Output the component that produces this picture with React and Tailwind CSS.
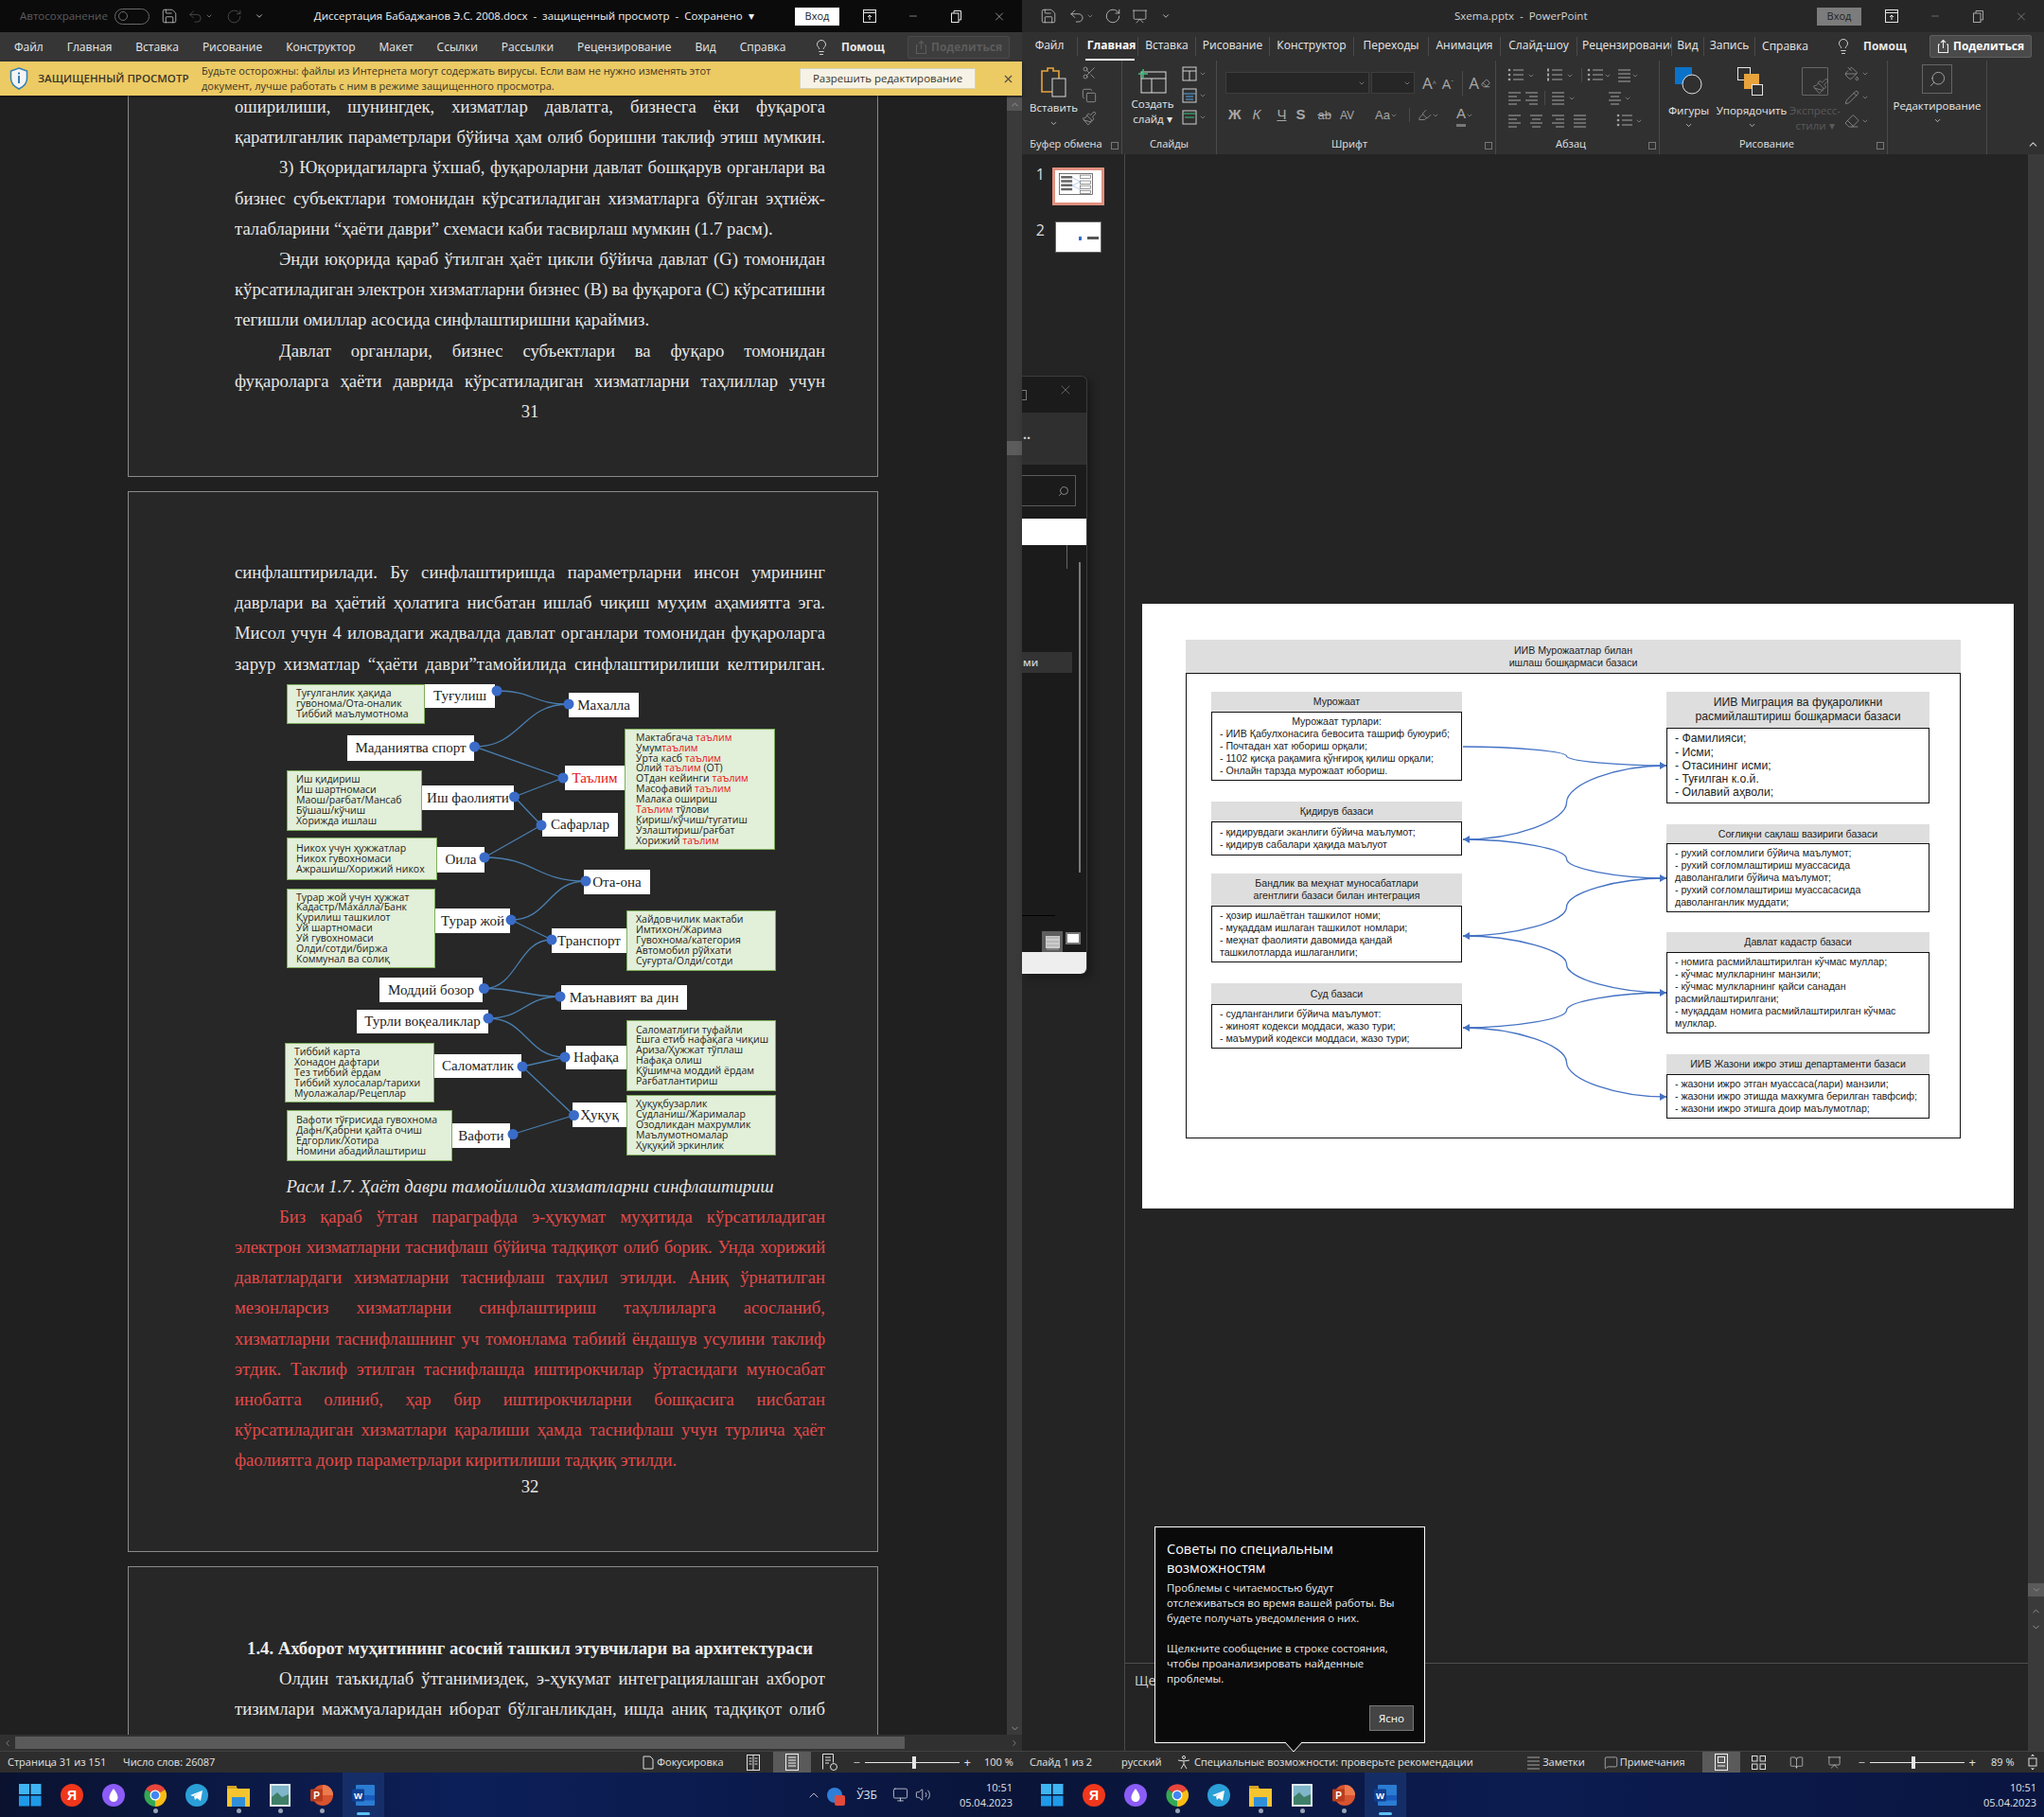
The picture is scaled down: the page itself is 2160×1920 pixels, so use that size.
import React from "react";
import {
  Scissors, Copy, Paintbrush, Search, ChevronDown, ChevronUp, ChevronLeft, ChevronRight,
  Lightbulb, Save, Undo2, RotateCw, Minus, X, PaintBucket, Pencil, Eraser, Highlighter,
  MessageSquare, Monitor, Volume2, BookOpen, Presentation,
} from "lucide-react";

const serif = "font-['Liberation_Serif',serif]";
const arial = "font-['Liberation_Sans',Arial,sans-serif]";

// --- small drawn icons ---
const Lines = ({ kind = "left", className = "" }) => {
  const rows = {
    left: [[1, 13], [1, 9], [1, 13], [1, 9]],
    center: [[1, 13], [3, 9], [1, 13], [3, 9]],
    right: [[1, 13], [5, 9], [1, 13], [5, 9]],
    justify: [[1, 13], [1, 13], [1, 13], [1, 13]],
  }[kind];
  return (
    <svg width="15" height="15" viewBox="0 0 15 15" className={className}>
      {rows.map(([x, w], i) => (
        <rect key={i} x={x} y={1.5 + i * 4} width={w} height="1" fill="#a4a4a4" />
      ))}
    </svg>
  );
};

const Bullets = ({ num }) => (
  <svg width="18" height="15" viewBox="0 0 18 15">
    {[2, 7, 12].map((y) => (
      <g key={y}>
        {num ? <rect x="1" y={y - 1.5} width="2" height="3" fill="#a4a4a4" /> : <circle cx="2" cy={y} r="1.3" fill="#a4a4a4" />}
        <rect x="6" y={y - 0.5} width="11" height="1" fill="#a4a4a4" />
      </g>
    ))}
  </svg>
);

const Caret = ({ className = "" }) => <ChevronDown size={8} strokeWidth={2} className={`text-[#9a9a9a] ${className}`} />;

const ShareIcon = ({ color = "#ddd" }) => (
  <svg width="14" height="16" viewBox="0 0 14 16" fill="none" stroke={color} strokeWidth="1.1">
    <path d="M3 6H1.5v8.5h10V6H10" />
    <path d="M6.5 10V1.5M4 4l2.5-2.5L9 4" />
  </svg>
);

const RibbonIcon = () => (
  <svg width="14" height="14" viewBox="0 0 14 14" fill="none" stroke="#e5e5e5" strokeWidth="1">
    <rect x="0.5" y="0.5" width="13" height="13" />
    <path d="M0.5 3.5h13M7 11V6M5 8l2-2 2 2" />
  </svg>
);

const Restore = ({ color }) => (
  <svg width="11" height="13" viewBox="0 0 11 13" fill="none" stroke={color} strokeWidth="1">
    <rect x="0.5" y="3" width="7.5" height="9.5" />
    <path d="M3 3V0.5h7.5V10H8" />
  </svg>
);

const WinLogo = () => (
  <svg width="24" height="24" viewBox="0 0 24 24">
    <rect x="0" y="0" width="11" height="11" fill="#3fb4f2" />
    <rect x="12.5" y="0" width="11" height="11" fill="#3fb4f2" />
    <rect x="0" y="12.5" width="11" height="11" fill="#1f9ae8" />
    <rect x="12.5" y="12.5" width="11" height="11" fill="#1f9ae8" />
  </svg>
);

const Yandex = () => (
  <svg width="24" height="24" viewBox="0 0 24 24">
    <circle cx="12" cy="12" r="12" fill="#f0371c" />
    <text x="12" y="17" textAnchor="middle" fontSize="14" fontWeight="700" fill="#fff" fontFamily="Liberation Sans">Я</text>
  </svg>
);

const Alice = () => (
  <svg width="24" height="24" viewBox="0 0 24 24">
    <circle cx="12" cy="12" r="12" fill="#8b5cf6" />
    <path d="M12 5c3 4 4.500 7 4.500 9.500a4.500 4.500 0 0 1-9 0C7.500 12 9 9 12 5z" fill="#fff" />
  </svg>
);

const Chrome = () => (
  <svg width="24" height="24" viewBox="0 0 24 24">
    <path d="M12 12 2 6a12 12 0 0 1 20.400 0z" fill="#e8453c" />
    <path d="M12 12 22.400 6A12 12 0 0 1 12 24z" fill="#f9bc15" />
    <path d="M12 12V24A12 12 0 0 1 2 6z" fill="#34a853" />
    <circle cx="12" cy="12" r="5.500" fill="#fff" />
    <circle cx="12" cy="12" r="4.300" fill="#4285f4" />
  </svg>
);

const Telegram = () => (
  <svg width="24" height="24" viewBox="0 0 24 24">
    <circle cx="12" cy="12" r="12" fill="#2a9fd8" />
    <path d="M5 12l13-5-2 11-4-3-2 2-1-4 6-4-7 4z" fill="#fff" />
  </svg>
);

const Folder = () => (
  <svg width="24" height="24" viewBox="0 0 24 24">
    <path d="M0 2h9l2 3h13v19H0z" fill="#f5c530" />
    <rect x="5" y="14" width="14" height="10" fill="#2f8fd8" />
    <rect x="0" y="2" width="10" height="3" fill="#d9a520" />
  </svg>
);

const Photos = () => (
  <svg width="24" height="26" viewBox="0 0 24 26">
    <rect x="1" y="1" width="22" height="24" fill="#dfe9ee" />
    <rect x="3" y="3" width="18" height="20" fill="#7fb6c9" />
    <path d="M3 23v-8l6-5 5 5 7-3v11z" fill="#3f7f68" />
  </svg>
);

const PptIcon = () => (
  <svg width="24" height="24" viewBox="0 0 24 24">
    <circle cx="13" cy="12" r="11" fill="#d8532f" />
    <path d="M13 1a11 11 0 0 1 11 11H13z" fill="#ec7a4d" />
    <rect x="0" y="5.500" width="13" height="13" rx="1" fill="#b83c1e" />
    <text x="6.500" y="16" textAnchor="middle" fontSize="10" fontWeight="700" fill="#fff" fontFamily="Liberation Sans">P</text>
  </svg>
);

const WordIcon = () => (
  <svg width="24" height="24" viewBox="0 0 24 24">
    <rect x="4" y="1" width="20" height="22" rx="1" fill="#2b7cd3" />
    <rect x="4" y="12" width="20" height="5.500" fill="#185abd" />
    <rect x="0" y="5.500" width="13" height="13" rx="1" fill="#103f91" />
    <text x="6.500" y="15.500" textAnchor="middle" fontSize="9.500" fontWeight="700" fill="#fff" fontFamily="Liberation Sans">W</text>
  </svg>
);

const Shield = () => (
  <svg width="20" height="24" viewBox="0 0 20 24">
    <path d="M10 1 18.500 4v8c0 5-3.500 8.500-8.500 11C5 20.500 1.500 17 1.500 12V4z" fill="#f4f4f4" stroke="#2f7fb8" strokeWidth="1.500" />
    <rect x="9" y="9" width="2" height="8" fill="#2f7fb8" />
    <rect x="9" y="5.500" width="2" height="2" fill="#2f7fb8" />
  </svg>
);

// --- window chrome ---
const WindowButtons = ({ login, dim }) => (
  <div className="flex items-center h-full">
    <div className={`w-[47px] h-[19px] flex items-center justify-center text-[11px] ${login}`}>Вход</div>
    <div className="w-[32px] ml-[16px] flex justify-center"><RibbonIcon /></div>
    <div className="w-[14px] ml-[23px] flex justify-center"><Minus size={12} color={dim} strokeWidth={1} /></div>
    <div className="w-[14px] ml-[31px] flex justify-center"><Restore color={dim} /></div>
    <div className="w-[14px] ml-[32px] flex justify-center"><X size={15} color={dim} strokeWidth={1} /></div>
  </div>
);

const HelpShare = ({ active }) => (
  <div className="flex items-center h-full ml-auto">
    <Lightbulb size={18} strokeWidth={1.2} className="text-[#e5e5e5] mr-[12px]" />
    <span className="font-bold text-[12px] text-[#e8e8e8] w-[70px]">Помощ</span>
    <div className={`w-[108px] h-[24px] rounded-[2px] flex items-center justify-center gap-[3px] text-[12px] font-bold border ${active ? "bg-[#4a4a4a] border-[#5e5e5e] text-white" : "bg-[#3d3d3d] border-[#4a4a4a] text-[#5c5c5c]"}`}>
      <ShareIcon color={active ? "#eee" : "#5c5c5c"} />
      Поделиться
    </div>
  </div>
);

const VSlider = ({ pct }) => (
  <div className="relative w-[100px] h-[1px] bg-[#e5e5e5]">
    <div className="absolute top-[-6px] w-[4px] h-[13px] bg-[#e5e5e5]" style={{ left: pct }} />
  </div>
);

const BookView = () => (
  <svg width="14" height="17" viewBox="0 0 14 17" fill="none" stroke="#e0e0e0" strokeWidth="1">
    <rect x="0.5" y="0.5" width="13" height="16" />
    <path d="M7 .5v16M2.500 4h3M2.500 7h3M2.500 10h3M8.500 4h3M8.500 7h3M8.500 10h3" />
  </svg>
);

const PageView = () => (
  <svg width="14" height="18" viewBox="0 0 14 18" fill="none" stroke="#f0f0f0" strokeWidth="1">
    <rect x="0.500" y="0.500" width="13" height="17" />
    <path d="M3 4h8M3 7h8M3 10h8M3 13h8" />
  </svg>
);

const WebView = () => (
  <svg width="16" height="18" viewBox="0 0 16 18" fill="none" stroke="#e0e0e0" strokeWidth="1">
    <path d="M.5 16.500V.5h11v9" />
    <path d="M3 4h6M3 7h6M3 10h4" />
    <circle cx="12" cy="14" r="3.500" />
  </svg>
);

const NormalView = () => (
  <svg width="14" height="18" viewBox="0 0 14 18" fill="none" stroke="#f0f0f0" strokeWidth="1">
    <rect x="0.500" y="0.500" width="13" height="17" />
    <rect x="3.500" y="3.500" width="7" height="6" />
    <path d="M3 13h8" />
  </svg>
);

const SorterView = () => (
  <svg width="15" height="15" viewBox="0 0 15 15" fill="none" stroke="#e0e0e0" strokeWidth="1">
    <rect x="0.500" y="0.500" width="5.500" height="5.500" />
    <rect x="9" y="0.500" width="5.500" height="5.500" />
    <rect x="0.500" y="9" width="5.500" height="5.500" />
    <rect x="9" y="9" width="5.500" height="5.500" />
  </svg>
);

const TaskIcons = () => {
  const icons = [<WinLogo />, <Yandex />, <Alice />, <Chrome />, <Telegram />, <Folder />, <Photos />, <PptIcon />, <WordIcon />];
  return (
    <div className="flex items-center h-full pl-[10px]">
      {icons.map((ic, i) => (
        <div key={i} className={`relative w-[44px] h-full flex items-center justify-center ${i === 8 ? "bg-[#1d3a7a]/60" : ""}`}>
          {ic}
          {[3, 5, 6, 7].includes(i) && <span className="absolute bottom-[4px] w-[5px] h-[5px] rounded-full bg-[#9aa3b5]" />}
          {i === 8 && <span className="absolute bottom-[2px] w-[14px] h-[3px] rounded-[2px] bg-[#5cc0f5]" />}
        </div>
      ))}
    </div>
  );
};

const Clock = () => (
  <div className="flex flex-col items-end text-[11px] leading-[16px] text-[#dfe3ea] pr-[8px] ml-[30px]">
    <span>10:51</span>
    <span>05.04.2023</span>
  </div>
);

// --- word document ---
const Line = ({ children, indent, plain, red, tight }) => (
  <div className={`h-[32.2px] leading-[32.2px] text-[18.67px] ${red ? "text-[#e24a4a]" : "text-[#e6e6e6]"} ${plain ? "" : "text-justify [text-align-last:justify]"} ${indent ? "pl-[47px]" : ""} ${tight ? "[word-spacing:-2px] tracking-[-0.15px]" : ""}`}>
    {children}
  </div>
);

const Node = ({ className, children }) => (
  <div className={`absolute bg-white flex items-center justify-center text-[15px] text-[#222] ${serif} ${className}`}>{children}</div>
);

const Green = ({ className, children }) => (
  <div className={`absolute bg-[#e2efd9] border border-[#7fae5c] pl-[9px] flex flex-col justify-center text-[10.500px] leading-[10.900px] text-[#222] whitespace-nowrap ${className}`}>{children}</div>
);

const R = ({ children }) => <span className="text-[#e81414]">{children}</span>;

const dots = {
  tug: [225, 10], mah: [301, 24], mad: [201.5, 69], tal: [295, 102], ish: [243.5, 122], saf: [272, 152],
  oil: [212, 186], ota: [319, 211], tur: [240, 252], tra: [283, 273], mod: [211.5, 324.5], man: [292, 333],
  tul: [216, 356], naf: [297, 397], sal: [252, 407], huq: [306.5, 458.5], vaf: [242, 478.5],
};
const curved = [["tug", "mah"], ["mah", "mad"], ["oil", "ota"], ["ota", "tur"], ["tra", "mod"], ["mod", "man"], ["man", "tul"], ["tul", "naf"]];
const straight = [["mad", "tal"], ["tal", "ish"], ["ish", "saf"], ["saf", "oil"], ["tur", "tra"], ["naf", "sal"], ["sal", "huq"], ["huq", "vaf"]];

const LifeFigure = () => (
  <div className="relative h-[510px] mt-[2px] ml-[52px] w-[522px] font-['Open_Sans',sans-serif]">
    <Green className="left-[3px] top-[3px] w-[146px] h-[42px]">
      <span>Туғулганлик ҳақида</span><span>гувонома/Ота-оналик</span><span>Тиббий маълумотнома</span>
    </Green>
    <Node className="left-[149px] top-[3px] w-[74px] h-[25px]">Туғулиш</Node>
    <Node className="left-[301px] top-[12px] w-[74px] h-[26px]">Махалла</Node>
    <Node className="left-[67px] top-[57px] w-[134px] h-[27px]">Маданиятва спорт</Node>
    <Node className="left-[297px] top-[89px] w-[63px] h-[26px] text-[#e81414]">Таълим</Node>
    <Green className="left-[360px] top-[50px] w-[159px] h-[128px] pl-[11px]">
      <span>Мактабгача <R>таълим</R></span><span>Умум<R>таълим</R></span><span>Ўрта касб <R>таълим</R></span>
      <span>Олий <R>таълим</R> (ОТ)</span><span>ОТдан кейинги <R>таълим</R></span><span>Масофавий <R>таълим</R></span>
      <span>Малака ошириш</span><span><R>Таълим</R> тўлови</span><span>Кириш/кўчиш/тугатиш</span>
      <span>Ўзлаштириш/рағбат</span><span>Хорижий <R>таълим</R></span>
    </Green>
    <Green className="left-[3px] top-[94px] w-[143px] h-[64px]">
      <span>Иш қидириш</span><span>Иш шартномаси</span><span>Маош/рағбат/Мансаб</span><span>Бўшаш/кўчиш</span><span>Хорижда ишлаш</span>
    </Green>
    <Node className="left-[146px] top-[110px] w-[97px] h-[26px]">Иш фаолияти</Node>
    <Node className="left-[273px] top-[139px] w-[80px] h-[25px]">Сафарлар</Node>
    <Green className="left-[3px] top-[165px] w-[159px] h-[45px]">
      <span>Никох учун ҳужжатлар</span><span>Никох гувохномаси</span><span>Ажрашиш/Хорижий никох</span>
    </Green>
    <Node className="left-[162px] top-[175px] w-[50px] h-[27px]">Оила</Node>
    <Node className="left-[317px] top-[199px] w-[70px] h-[26px]">Ота-она</Node>
    <Green className="left-[3px] top-[219px] w-[157px] h-[84px]">
      <span>Турар жой учун ҳужжат</span><span>Кадастр/Махалла/Банк</span><span>Қурилиш ташкилот</span><span>Уй шартномаси</span>
      <span>Уй гувохномаси</span><span>Олди/сотди/биржа</span><span>Коммунал ва солиқ</span>
    </Green>
    <Node className="left-[160px] top-[240px] w-[79px] h-[26px]">Турар жой</Node>
    <Node className="left-[283px] top-[261px] w-[79px] h-[26px]">Транспорт</Node>
    <Green className="left-[362px] top-[242px] w-[158px] h-[64px]">
      <span>Хайдовчилик мактаби</span><span>Имтихон/Жарима</span><span>Гувохнома/категория</span><span>Автомобил рўйхати</span><span>Суғурта/Олди/сотди</span>
    </Green>
    <Node className="left-[101px] top-[313px] w-[109px] h-[26px]">Моддий бозор</Node>
    <Node className="left-[293px] top-[321px] w-[133px] h-[26px]">Маънавият ва дин</Node>
    <Node className="left-[77px] top-[347px] w-[139px] h-[25px]">Турли воқеаликлар</Node>
    <Green className="left-[362px] top-[358px] w-[158px] h-[75px]">
      <span>Саломатлиги туфайли</span><span>Ешга етиб нафақага чиқиш</span><span>Ариза/Ҳужжат тўплаш</span><span>Нафақа олиш</span><span>Қўшимча моддий ёрдам</span><span>Рағбатлантириш</span>
    </Green>
    <Node className="left-[298px] top-[385px] w-[64px] h-[25px]">Нафақа</Node>
    <Green className="left-[1px] top-[382px] w-[158px] h-[63px]">
      <span>Тиббий карта</span><span>Хонадон дафтари</span><span>Тез тиббий ёрдам</span><span>Тиббий хулосалар/тарихи</span><span>Муолажалар/Рецеплар</span>
    </Green>
    <Node className="left-[159px] top-[394px] w-[92px] h-[25px]">Саломатлик</Node>
    <Node className="left-[305px] top-[445px] w-[57px] h-[26px]">Ҳуқуқ</Node>
    <Green className="left-[362px] top-[437px] w-[158px] h-[64px]">
      <span>Ҳуқуқбузарлик</span><span>Судланиш/Жарималар</span><span>Озодликдан махрумлик</span><span>Маълумотномалар</span><span>Ҳуқуқий эркинлик</span>
    </Green>
    <Green className="left-[3px] top-[453px] w-[175px] h-[54px]">
      <span>Вафоти тўғрисида гувохнома</span><span>Дафн/Қабрни қайта очиш</span><span>Едгорлик/Хотира</span><span>Номини абадийлаштириш</span>
    </Green>
    <Node className="left-[178px] top-[467px] w-[61px] h-[26px]">Вафоти</Node>
    <svg width="522" height="510" className="absolute left-0 top-0 pointer-events-none">
      {curved.map(([a, b]) => {
        const [x1, y1] = dots[a];
        const [x2, y2] = dots[b];
        const mx = (x1 + x2) / 2;
        return <path key={a + b} d={`M${x1} ${y1}C${mx} ${y1} ${mx} ${y2} ${x2} ${y2}`} fill="none" stroke="#4a7fb0" strokeWidth="1.300" />;
      })}
      {straight.map(([a, b]) => (
        <line key={a + b} x1={dots[a][0]} y1={dots[a][1]} x2={dots[b][0]} y2={dots[b][1]} stroke="#4a7fb0" strokeWidth="1.300" />
      ))}
      {Object.entries(dots).map(([k, [x, y]]) => (
        <circle key={k} cx={x} cy={y} r="5.500" fill="#3a6cc8" />
      ))}
    </svg>
  </div>
);

const StatusLeft = () => (
  <div className="h-[23px] bg-[#2d2d2d] border-t border-[#424242] flex items-center text-[11px] text-[#e4e4e4]">
    <span className="ml-[8px] w-[122px]">Страница 31 из 151</span>
    <span>Число слов: 26087</span>
    <span className="ml-auto flex items-center gap-[3px]">
      <svg width="13" height="15" viewBox="0 0 13 15" fill="none" stroke="#ddd"><path d="M2 1h7l3 3v10H2z" /></svg>
      Фокусировка
    </span>
    <span className="ml-[24px]"><BookView /></span>
    <span className="ml-[14px] w-[40px] h-full bg-[#5a5a5a] flex items-center justify-center"><PageView /></span>
    <span className="ml-[12px]"><WebView /></span>
    <Minus size={9} className="ml-[16px]" />
    <span className="ml-[4px]"><VSlider pct="50px" /></span>
    <span className="ml-[5px] text-[13px] leading-none">+</span>
    <span className="ml-[14px] w-[40px]">100 %</span>
  </div>
);

const WordWindow = () => (
  <div className="w-[1080px] h-full flex flex-col">
    {/* title bar */}
    <div className="h-[34px] bg-[#0b0b0b] flex items-center relative text-[11.500px]">
      <span className="ml-[21px] text-[#5c5c5c]">Автосохранение</span>
      <div className="ml-[7px] w-[37px] h-[17px] rounded-full border border-[#6a6a6a] flex items-center pl-[3px]">
        <span className="w-[10px] h-[10px] rounded-full border border-[#6a6a6a]" />
      </div>
      <Save size={18} strokeWidth={1} className="ml-[12px] text-[#d8d8d8]" />
      <Undo2 size={17} strokeWidth={1} className="ml-[10px] text-[#5c5c5c]" />
      <Caret className="ml-[2px]" />
      <RotateCw size={17} strokeWidth={1} className="ml-[14px] text-[#5c5c5c]" />
      <ChevronDown size={10} className="ml-[13px] text-[#d8d8d8]" />
      <span className="ml-[53px] text-[#f0f0f0] whitespace-pre w-[461px]">Диссертация Бабаджанов Э.С. 2008.docx  -  защищенный просмотр  -  Сохранено  ▾</span>
      <div className="ml-auto h-full pr-[17px]">
        <WindowButtons login="bg-white text-[#222]" dim="#e8e8e8" />
      </div>
    </div>
    {/* tabs */}
    <div className="h-[31px] bg-[#363636] flex items-center text-[12px] text-[#e8e8e8] pr-[13px]">
      <div className="flex gap-[25px] pl-[15px]">
        {["Файл", "Главная", "Вставка", "Рисование", "Конструктор", "Макет", "Ссылки", "Рассылки", "Рецензирование", "Вид", "Справка"].map((t) => (
          <span key={t}>{t}</span>
        ))}
      </div>
      <HelpShare />
    </div>
    {/* protected view */}
    <div className="h-[36px] bg-[#ecca64] flex items-center text-[#3a3526] relative z-10 shadow-[0_1px_3px_rgba(0,0,0,0.5)]">
      <div className="ml-[10px]"><Shield /></div>
      <span className="ml-[10px] text-[11.500px] font-semibold w-[173px] whitespace-nowrap">ЗАЩИЩЕННЫЙ ПРОСМОТР</span>
      <div className="text-[11px] leading-[16px] w-[600px] whitespace-nowrap">
        <div>Будьте осторожны: файлы из Интернета могут содержать вирусы. Если вам не нужно изменять этот</div>
        <div>документ, лучше работать с ним в режиме защищенного просмотра.</div>
      </div>
      <div className="ml-[32px] w-[186px] h-[22px] bg-[#f6f3e6] border border-[#d8d2b8] flex items-center justify-center text-[11.500px]">Разрешить редактирование</div>
      <X size={13} className="ml-[28px] text-[#4a4a4a]" strokeWidth={2} />
    </div>
    {/* document */}
    <div className="flex-1 min-h-0 flex bg-[#202020]">
      <div className={`w-[1064px] overflow-hidden ${serif}`}>
        <div className="-mt-[4px] ml-[135px] w-[793px] flex flex-col gap-[15px]">
          <div className="h-[407px] bg-[#272727] border border-t-0 border-[#8a8a8a] pl-[112px] pr-[55px]">
            <Line>оширилиши, шунингдек, хизматлар давлатга, бизнесга ёки фуқарога</Line>
            <Line tight>қаратилганлик параметрлари бўйича ҳам олиб боришни таклиф этиш мумкин.</Line>
            <Line indent>3) Юқоридагиларга ўхшаб, фуқароларни давлат бошқарув органлари ва</Line>
            <Line>бизнес субъектлари томонидан кўрсатиладиган хизматларга бўлган эҳтиёж-</Line>
            <Line plain>талабларини “ҳаёти даври” схемаси каби тасвирлаш мумкин (1.7 расм).</Line>
            <Line indent>Энди юқорида қараб ўтилган ҳаёт цикли бўйича давлат (G) томонидан</Line>
            <Line>кўрсатиладиган электрон хизматларни бизнес (B) ва фуқарога (C) кўрсатишни</Line>
            <Line plain>тегишли омиллар асосида синфлаштиришни қараймиз.</Line>
            <Line indent>Давлат органлари, бизнес субъектлари ва фуқаро томонидан</Line>
            <Line>фуқароларга ҳаёти даврида кўрсатиладиган хизматларни таҳлиллар учун</Line>
            <div className="text-center text-[18.67px] leading-[32px] text-[#e6e6e6]">31</div>
          </div>
          <div className="h-[1121px] bg-[#272727] border border-[#8a8a8a] pt-[69px] pl-[112px] pr-[55px]">
            <Line>синфлаштирилади. Бу синфлаштиришда параметрларни инсон умрининг</Line>
            <Line>даврлари ва ҳаётий ҳолатига нисбатан ишлаб чиқиш муҳим аҳамиятга эга.</Line>
            <Line>Мисол учун 4 иловадаги жадвалда давлат органлари томонидан фуқароларга</Line>
            <Line>зарур хизматлар “ҳаёти даври”тамойилида синфлаштирилиши келтирилган.</Line>
            <LifeFigure />
            <div className="mt-[8px] h-[32px] leading-[32px] text-center italic text-[18.67px] text-[#e6e6e6]">Расм 1.7. Ҳаёт даври тамойилида хизматларни синфлаштириш</div>
            <Line red indent>Биз қараб ўтган параграфда э-ҳукумат муҳитида кўрсатиладиган</Line>
            <Line red tight>электрон хизматларни таснифлаш бўйича тадқиқот олиб борик. Унда хорижий</Line>
            <Line red>давлатлардаги хизматларни таснифлаш таҳлил этилди. Аниқ ўрнатилган</Line>
            <Line red>мезонларсиз хизматларни синфлаштириш таҳллиларга асосланиб,</Line>
            <Line red>хизматларни таснифлашнинг уч томонлама табиий ёндашув усулини таклиф</Line>
            <Line red>этдик. Таклиф этилган таснифлашда иштирокчилар ўртасидаги муносабат</Line>
            <Line red>инобатга олиниб, ҳар бир иштирокчиларни бошқасига нисбатан</Line>
            <Line red>кўрсатиладиган хизматлари қаралиши ҳамда таснифлаш учун турлича ҳаёт</Line>
            <Line red plain>фаолиятга доир параметрлари киритилиши тадқиқ этилди.</Line>
            <div className="text-center text-[18.67px] leading-[24px] text-[#e6e6e6]">32</div>
          </div>
          <div className="h-[400px] bg-[#272727] border border-[#8a8a8a] pt-[70px] pl-[112px] pr-[55px]">
            <div className="h-[32px] leading-[32px] text-center font-bold text-[18.67px] text-[#eee] whitespace-nowrap">1.4. Ахборот муҳитининг асосий ташкил этувчилари ва архитектураси</div>
            <Line indent>Олдин таъкидлаб ўтганимиздек, э-ҳукумат интеграциялашган ахборот</Line>
            <Line>тизимлари мажмуаларидан иборат бўлганликдан, ишда аниқ тадқиқот олиб</Line>
          </div>
        </div>
      </div>
      {/* vertical scrollbar */}
      <div className="w-[16px] bg-[#3a3a3a] flex flex-col">
        <div className="h-[14px] mt-[2px] bg-[#555] flex items-center justify-center"><ChevronUp size={11} className="text-[#999]" /></div>
        <div className="h-[15px] mt-[349px] bg-[#5c5c5c]" />
        <div className="mt-auto h-[14px] flex items-center justify-center"><ChevronDown size={11} className="text-[#999]" /></div>
      </div>
    </div>
    {/* horizontal scrollbar */}
    <div className="h-[17px] bg-[#303030] flex items-center px-[3px] gap-[3px]">
      <ChevronLeft size={10} className="text-[#888]" />
      <div className="w-[940px] h-[13px] bg-[#5a5a5a]" />
      <ChevronRight size={10} className="ml-auto text-[#888]" />
    </div>
    <StatusLeft />
    <div className="h-[47px] bg-[linear-gradient(90deg,#0a1230,#0c1f58_45%,#0b1b4e_70%,#0a1438)] flex items-center pr-[2px]">
      <TaskIcons />
      <div className="ml-auto flex items-center text-[#dfe3ea]">
        <ChevronUp size={16} strokeWidth={1.200} />
        <span className="ml-[6px] relative w-[16px] h-[16px] rounded-full bg-[#2f7fd8]">
          <span className="absolute -right-[3px] -bottom-[3px] w-[11px] h-[11px] rounded-[2px] bg-[#e34a3c]" />
        </span>
        <span className="ml-[15px] text-[12px]">ЎЗБ</span>
        <Monitor size={17} strokeWidth={1.100} className="ml-[16px]" />
        <Volume2 size={17} strokeWidth={1.100} className="ml-[7px]" />
        <Clock />
      </div>
    </div>
  </div>
);

// --- powerpoint ---
const Group = ({ w, label, labelPad = "", children, launcher }) => (
  <div className={`relative h-full border-r border-[#4a4a4a] flex flex-col shrink-0 ${w}`}>
    <div className="flex-1 min-h-0 flex">{children}</div>
    <div className={`h-[20px] text-center text-[11px] leading-[18px] text-[#e0e0e0] whitespace-nowrap ${labelPad}`}>{label}</div>
    {launcher && <span className="absolute right-[3px] bottom-[5px] w-[8px] h-[8px] border border-[#777]" />}
  </div>
);

const BigLabel = ({ children, dim, w }) => (
  <div className={`flex flex-col items-center text-[11.500px] leading-[16px] text-center ${dim ? "text-[#5a5a5a]" : "text-[#e6e6e6]"} ${w}`}>{children}</div>
);

const PasteIcon = () => (
  <svg width="28" height="32" viewBox="0 0 28 32" fill="none">
    <path d="M1 4h6V1h6v3h6v22H1z" stroke="#e8a33d" strokeWidth="1.600" />
    <rect x="12" y="12" width="14" height="19" fill="#303030" stroke="#d8d8d8" />
  </svg>
);

const NewSlideIcon = () => (
  <svg width="30" height="26" viewBox="0 0 30 26" fill="none">
    <rect x="3" y="3" width="26" height="22" stroke="#ddd" />
    <path d="M3 10h26M14 10v15" stroke="#ddd" />
    <path d="M5 0v10M0 5h10" stroke="#3fc07a" strokeWidth="1.500" />
  </svg>
);

const LayoutIcon = ({ v }) => (
  <svg width="16" height="16" viewBox="0 0 16 16" fill="none" stroke="#d0d0d0">
    <rect x="1" y="1" width="14" height="14" />
    {v === 0 && <path d="M1 5h14M8 5v10" />}
    {v === 1 && <path d="M4 1V.5M1 6h14M4 9h8M4 12h8" stroke="#5aa6e8" />}
    {v === 2 && <path d="M1 4h14M3 8h10" stroke="#3fc07a" />}
  </svg>
);

const ShapesIcon = () => (
  <svg width="30" height="30" viewBox="0 0 30 30">
    <rect x="0" y="0" width="18" height="18" fill="#0a72c9" />
    <circle cx="18" cy="18" r="10" fill="#303030" stroke="#e0e0e0" />
  </svg>
);

const ArrangeIcon = () => (
  <svg width="30" height="30" viewBox="0 0 30 30" fill="none">
    <rect x="0.500" y="0.500" width="13" height="13" fill="#303030" stroke="#e6e6e6" />
    <rect x="7" y="7" width="16" height="16" fill="#e8a33d" />
    <rect x="15.500" y="18.500" width="11" height="11" fill="#303030" stroke="#e6e6e6" />
  </svg>
);

const Ribbon = () => (
  <div className="h-[99px] bg-[#303030] flex text-[#a8a8a8]">
    <Group w="w-[106px]" label="Буфер обмена" labelPad="pr-[12px]" launcher>
      <div className="w-[60px] flex flex-col items-center pt-[7px] pl-[7px]">
        <PasteIcon />
        <span className="text-[11.500px] leading-[16px] mt-[3px] text-[#e6e6e6]">Вставить</span>
        <ChevronDown size={9} className="mt-[4px] text-[#ddd]" />
      </div>
      <div className="flex flex-col items-center pt-[5px] gap-[8px] ml-[3px]">
        <Scissors size={16} strokeWidth={1.100} />
        <Copy size={16} strokeWidth={1.100} />
        <Paintbrush size={16} strokeWidth={1.100} />
      </div>
    </Group>
    <Group w="w-[100px]" label="Слайды">
      <div className="w-[64px] flex flex-col items-center pt-[9px]">
        <NewSlideIcon />
        <BigLabel><span className="mt-[3px]">Создать</span><span>слайд ▾</span></BigLabel>
      </div>
      <div className="flex flex-col gap-[7px] pt-[6px] -ml-[1px]">
        {[0, 1, 2].map((v) => (
          <div key={v} className="flex items-center gap-[2px]"><LayoutIcon v={v} /><Caret /></div>
        ))}
      </div>
    </Group>
    <Group w="w-[295px]" label="Шрифт" labelPad="pr-[14px]" launcher>
      <div className="flex flex-col pl-[9px] pt-[11px] gap-[8px]">
        <div className="flex items-center gap-[2px]">
          <div className="w-[152px] h-[23px] bg-[#262626] border border-[#3e3e3e] flex items-center justify-end pr-[3px]"><Caret /></div>
          <div className="w-[46px] h-[23px] bg-[#262626] border border-[#3e3e3e] flex items-center justify-end pr-[3px]"><Caret /></div>
          <span className="ml-[6px] text-[17px] text-[#a8a8a8]">A<sup className="text-[7px]">^</sup></span>
          <span className="ml-[4px] text-[15px] text-[#a8a8a8]">A<sup className="text-[7px]">ˇ</sup></span>
          <span className="ml-[7px] text-[17px] text-[#a8a8a8] border-l border-[#4a4a4a] pl-[6px]">A</span>
          <Eraser size={10} />
        </div>
        <div className={`flex items-center text-[15px] h-[26px] ml-[3px] ${arial}`}>
          <span className="font-bold">Ж</span>
          <span className="italic ml-[12px]">К</span>
          <span className="underline ml-[17px]">Ч</span>
          <span className="font-bold ml-[10px]">S</span>
          <span className="line-through text-[13px] ml-[13px]">ab</span>
          <span className="text-[12px] ml-[9px]">AV</span>
          <span className="ml-[22px] text-[13px] flex items-center">Aa<Caret /></span>
          <span className="ml-[12px] flex items-center border-l border-[#4a4a4a] pl-[8px]"><Highlighter size={15} strokeWidth={1.100} /><Caret /></span>
          <span className="ml-[18px] flex items-center"><span className="border-b-[3px] border-[#777]">A</span><Caret /></span>
        </div>
      </div>
    </Group>
    <Group w="w-[173px]" label="Абзац" labelPad="pr-[14px]" launcher>
      <div className="flex flex-col pl-[12px] pt-[8px] gap-[9px]">
        <div className="flex items-center gap-[3px]">
          <Bullets /><Caret /><span className="ml-[9px]"><Bullets num /></span><Caret />
          <span className="ml-[5px] border-l border-[#4a4a4a] pl-[5px] flex items-center"><Bullets /><Caret /></span>
          <span className="ml-[3px] flex items-center"><Lines kind="justify" /><Caret /></span>
        </div>
        <div className="flex items-center gap-[3px]">
          <Lines /><Lines kind="right" />
          <span className="ml-[3px] border-l border-[#4a4a4a] pl-[6px] flex items-center gap-[3px]"><Lines kind="justify" /><Caret /></span>
          <span className="ml-[31px] flex items-center gap-[2px]"><Lines kind="center" /><Caret /></span>
        </div>
        <div className="flex items-center gap-[8px]">
          <Lines /><Lines kind="center" /><Lines kind="right" /><Lines kind="justify" />
          <span className="ml-[23px] flex items-center gap-[2px]"><Bullets /><Caret /></span>
        </div>
      </div>
    </Group>
    <Group w="w-[241px]" label="Рисование" labelPad="pr-[14px]" launcher>
      <div className="w-[61px] flex flex-col items-center pt-[7px]">
        <ShapesIcon />
        <span className="mt-[8px] text-[11.500px] leading-[16px] text-[#e6e6e6]">Фигуры</span>
        <ChevronDown size={9} className="mt-[3px] text-[#ddd]" />
      </div>
      <div className="w-[72px] flex flex-col items-center pt-[7px]">
        <ArrangeIcon />
        <span className="mt-[8px] text-[11.500px] leading-[16px] text-[#e6e6e6] whitespace-nowrap">Упорядочить</span>
        <ChevronDown size={9} className="mt-[3px] text-[#ddd]" />
      </div>
      <div className="w-[62px] flex flex-col items-center pt-[7px]">
        <div className="relative w-[28px] h-[30px] border border-[#666] rounded-[1px]"><Paintbrush size={18} strokeWidth={1} className="absolute right-[-2px] bottom-[0px] text-[#8a8a8a]" /></div>
        <BigLabel dim><span className="mt-[8px]">Экспресс-</span><span>стили ▾</span></BigLabel>
      </div>
      <div className="flex flex-col gap-[9px] pt-[6px]">
        <span className="flex items-center gap-[2px]"><PaintBucket size={16} strokeWidth={1} /><Caret /></span>
        <span className="flex items-center gap-[2px]"><Pencil size={16} strokeWidth={1} /><Caret /></span>
        <span className="flex items-center gap-[2px]"><Eraser size={16} strokeWidth={1} /><Caret /></span>
      </div>
    </Group>
    <Group w="w-[105px]" label="">
      <div className="w-full flex flex-col items-center pt-[4px]">
        <div className="w-[32px] h-[31px] border border-[#666] flex items-center justify-center"><Search size={19} strokeWidth={1} className="text-[#bbb] -scale-x-100" /></div>
        <span className="mt-[5px] text-[11.500px] leading-[16px] text-[#e6e6e6]">Редактирование</span>
        <ChevronDown size={9} className="mt-[3px] text-[#ddd]" />
      </div>
    </Group>
    <div className="flex-1 flex items-end justify-end pr-[5px] pb-[4px]"><ChevronUp size={13} className="text-[#ccc]" /></div>
  </div>
);

const SlideBox = ({ title, head, bodyH, w, big, children }) => (
  <div className={`${w} shrink-0`}>
    <div className={`bg-[#dedede] flex items-center justify-center text-center ${head} ${big ? "text-[12.200px] leading-[15px]" : "text-[10.600px] leading-[13px]"}`}>{title}</div>
    <div className={`border border-[#111] px-[8px] flex flex-col justify-center whitespace-nowrap ${bodyH} ${big ? "text-[12.200px] leading-[14.300px]" : "text-[10.600px] leading-[13px]"}`}>{children}</div>
  </div>
);

const pts = { a: 789, r1: 809, l2: 887, r2: 928, l3: 989, r3: 1049, l4: 1086, r4: 1159 };
const wires = [["a", "r1"], ["r1", "l2"], ["l2", "r2"], ["r2", "l3"], ["l3", "r3"], ["r3", "l4"], ["l4", "r4"]];
const isRight = (k) => k[0] === "r";

const SlideArrows = () => (
  <svg width="921" height="639" viewBox="1207 638 921 639" className="absolute left-0 top-0 pointer-events-none">
    {wires.map(([p, q]) => {
      const x1 = isRight(p) ? 1761 : 1546;
      const x2 = isRight(q) ? 1761 : 1546;
      const y1 = pts[p];
      const y2 = pts[q];
      const m = (x1 + x2) / 2 + 2;
      const ym = (y1 + y2) / 2;
      return <path key={p + q} d={`M${x1} ${y1}C${(x1 + m) / 2} ${y1} ${m} ${y1 + (ym - y1) * 0.5} ${m} ${ym}S${(x2 + m) / 2} ${y2} ${x2} ${y2}`} fill="none" stroke="#4472c4" strokeWidth="1.300" />;
    })}
    {[809, 928, 1049, 1159].map((y) => <path key={y} d={`M1761 ${y}l-7-4v8z`} fill="#4472c4" />)}
    {[887, 989, 1086].map((y) => <path key={y} d={`M1546 ${y}l7-4v8z`} fill="#4472c4" />)}
  </svg>
);

const Slide = () => (
  <div className={`relative w-[921px] h-[639px] bg-white pt-[38px] pl-[46px] pr-[56px] text-[#222] ${arial}`}>
    <div className="h-[35px] bg-[#dedede] flex flex-col items-center justify-center text-[10.600px] leading-[13px]">
      <span>ИИВ Мурожаатлар билан</span>
      <span>ишлаш бошқармаси базаси</span>
    </div>
    <div className="h-[492px] border border-[#111] pt-[19px] pl-[26px] pr-[32px] flex justify-between">
      <div className="flex flex-col">
        <SlideBox w="w-[265px]" title="Мурожаат" head="h-[21px]" bodyH="h-[73px]">
          <span className="text-center">Мурожаат турлари:</span>
          <span>- ИИВ Қабулхонасига бевосита ташриф буюуриб;</span>
          <span>- Почтадан хат юбориш орқали;</span>
          <span>- 1102 қисқа рақамига қўнғироқ қилиш орқали;</span>
          <span>- Онлайн тарзда мурожаат юбориш.</span>
        </SlideBox>
        <div className="mt-[22px]" />
        <SlideBox w="w-[265px]" title="Қидирув базаси" head="h-[21px]" bodyH="h-[36px]">
          <span>- қидирувдаги эканлиги бўйича маълумот;</span>
          <span>- қидирув сабалари ҳақида маълуот</span>
        </SlideBox>
        <div className="mt-[19px]" />
        <SlideBox w="w-[265px]" title={<span>Бандлик ва меҳнат муносабатлари<br />агентлиги базаси билан интеграция</span>} head="h-[34px]" bodyH="h-[60px]">
          <span>- ҳозир ишлаётган ташкилот номи;</span>
          <span>- муқаддам ишлаган ташкилот номлари;</span>
          <span>- меҳнат фаолияти давомида қандай</span>
          <span>ташкилотларда ишлаганлиги;</span>
        </SlideBox>
        <div className="mt-[22px]" />
        <SlideBox w="w-[265px]" title="Суд базаси" head="h-[22px]" bodyH="h-[47px]">
          <span>- судланганлиги бўйича маълумот:</span>
          <span>- жиноят кодекси моддаси, жазо тури;</span>
          <span>- маъмурий кодекси моддаси, жазо тури;</span>
        </SlideBox>
      </div>
      <div className="flex flex-col">
        <SlideBox big w="w-[278px]" title={<span>ИИВ Миграция ва фуқароликни<br />расмийлаштириш бошқармаси базаси</span>} head="h-[38px]" bodyH="h-[80px]">
          <span>- Фамилияси;</span>
          <span>- Исми;</span>
          <span>- Отасининг исми;</span>
          <span>- Туғилган к.о.й.</span>
          <span>- Оилавий аҳволи;</span>
        </SlideBox>
        <div className="mt-[22px]" />
        <SlideBox w="w-[278px]" title="Соғлиқни сақлаш вазириги базаси" head="h-[20px]" bodyH="h-[73px]">
          <span>- рухий соғломлиги бўйича маълумот;</span>
          <span>- рухий соғломлаштириш муассасида</span>
          <span>даволангалиги бўйича маълумот;</span>
          <span>- рухий соғломлаштириш муассасасида</span>
          <span>даволанганлик муддати;</span>
        </SlideBox>
        <div className="mt-[21px]" />
        <SlideBox w="w-[278px]" title="Давлат кадастр базаси" head="h-[21px]" bodyH="h-[86px]">
          <span>- номига расмийлаштирилган кўчмас муллар;</span>
          <span>- кўчмас мулкларнинг манзили;</span>
          <span>- кўчмас мулкларнинг қайси санадан</span>
          <span>расмийлаштирилгани;</span>
          <span>- муқаддам номига расмийлаштирилган кўчмас</span>
          <span>мулклар.</span>
        </SlideBox>
        <div className="mt-[22px]" />
        <SlideBox w="w-[278px]" title="ИИВ Жазони ижро этиш департаменти базаси" head="h-[21px]" bodyH="h-[47px]">
          <span>- жазони ижро этган муассаса(лари) манзили;</span>
          <span>- жазони ижро этишда махкумга берилган тавфсиф;</span>
          <span>- жазони ижро этишга доир маълумотлар;</span>
        </SlideBox>
      </div>
    </div>
    <SlideArrows />
  </div>
);

const Thumb1 = () => (
  <svg width="55" height="40" viewBox="0 0 55 40" className="border-[3px] border-[#e0917f] bg-white w-[55px] h-[40px]">
    <rect x="4" y="4" width="41" height="26" fill="none" stroke="#333" strokeWidth="0.800" />
    {[7, 12, 17, 22].map((y) => <rect key={y} x="6" y={y} width="14" height="3" fill="#666" />)}
    {[6, 13, 19, 25].map((y) => <rect key={y} x="30" y={y} width="13" height="4" fill="none" stroke="#555" strokeWidth="0.700" />)}
    <path d="M20 9l10 5-10 5 10 5" fill="none" stroke="#7aa0e0" strokeWidth="0.600" />
  </svg>
);

const Tab = ({ w, bold, children }) => (
  <div className={`${w} h-[20px] overflow-hidden whitespace-nowrap border-r border-[#4a4a4a] text-center relative ${bold ? "font-bold text-white" : ""}`}>
    {children}
  </div>
);

const StatusRight = () => (
  <div className="h-[23px] bg-[#2d2d2d] border-t border-[#424242] flex items-center text-[11px] text-[#e4e4e4]">
    <span className="ml-[8px] w-[97px]">Слайд 1 из 2</span>
    <span className="w-[58px]">русский</span>
    <svg width="16" height="16" viewBox="0 0 16 16" fill="none" stroke="#ddd"><circle cx="8" cy="3" r="1.500" /><path d="M2 6c4 1 8 1 12 0M8 7v3l-3 5M8 10l3 5" /></svg>
    <span className="ml-[3px] whitespace-nowrap">Специальные возможности: проверьте рекомендации</span>
    <span className="ml-auto flex items-center gap-[2px]"><Lines kind="justify" />Заметки</span>
    <span className="ml-[20px] flex items-center gap-[2px]"><MessageSquare size={15} strokeWidth={1} />Примечания</span>
    <span className="ml-[18px] w-[40px] h-full bg-[#5a5a5a] flex items-center justify-center"><NormalView /></span>
    <span className="ml-[12px]"><SorterView /></span>
    <BookOpen size={15} strokeWidth={1} className="ml-[25px]" />
    <Presentation size={15} strokeWidth={1} className="ml-[25px]" />
    <Minus size={9} className="ml-[17px]" />
    <span className="ml-[4px]"><VSlider pct="44px" /></span>
    <span className="ml-[5px] text-[13px] leading-none">+</span>
    <span className="ml-[16px] w-[30px]">89 %</span>
    <svg width="12" height="18" viewBox="0 0 12 18" fill="none" stroke="#ddd" className="ml-[8px] mr-[6px]"><rect x="2" y="5" width="8" height="8" /><path d="M6 1v2M6 15v2M4.500 2.500 6 1l1.500 1.500M4.500 15.500 6 17l1.500-1.500" /></svg>
  </div>
);

const PowerPointWindow = () => (
  <div className="relative w-[1080px] h-full flex flex-col">
    <div className="h-[34px] bg-[#272727] flex items-center text-[#d6d6d6] text-[11.500px]">
      <Save size={18} strokeWidth={1} className="ml-[19px]" />
      <Undo2 size={18} strokeWidth={1} className="ml-[12px]" />
      <Caret className="ml-[1px]" />
      <RotateCw size={18} strokeWidth={1} className="ml-[11px]" />
      <Presentation size={17} strokeWidth={1} className="ml-[11px]" />
      <ChevronDown size={10} className="ml-[14px]" />
      <span className="ml-[300px] whitespace-pre">Sxema.pptx  -  PowerPoint</span>
      <div className="ml-auto h-full pr-[17px]">
        <WindowButtons login="bg-[#7c7c7c] text-[#222]" dim="#a8a8a8" />
      </div>
    </div>
    <div className="h-[30px] bg-[#303030] flex items-center text-[12px] text-[#e8e8e8] pr-[13px]">
      <Tab w="w-[59px]">Файл</Tab>
      <div className="relative">
        <Tab w="w-[64px] pl-[8px]" bold>Главная</Tab>
        <span className="absolute left-[8px] -bottom-[5px] w-[52px] h-[2px] bg-white" />
      </div>
      <Tab w="w-[61px]">Вставка</Tab>
      <Tab w="w-[78px]">Рисование</Tab>
      <Tab w="w-[89px]">Конструктор</Tab>
      <Tab w="w-[79px]">Переходы</Tab>
      <Tab w="w-[76px]">Анимация</Tab>
      <Tab w="w-[81px]">Слайд-шоу</Tab>
      <Tab w="w-[100px] pl-[5px] text-left">Рецензирование</Tab>
      <Tab w="w-[34px]">Вид</Tab>
      <Tab w="w-[54px]">Запись</Tab>
      <span className="w-[63px] text-center">Справка</span>
      <HelpShare active />
    </div>
    <Ribbon />
    {/* workspace */}
    <div className="flex-1 min-h-0 flex bg-[#242424]">
      <div className="w-[109px] border-r border-[#4a4a4a] pt-[14px] shrink-0">
        <div className="flex items-start">
          <span className="w-[32px] text-right text-[16px] leading-[18px] text-[#ddd] pr-[8px] mt-[-2px]">1</span>
          <Thumb1 />
        </div>
        <div className="flex items-start mt-[17px]">
          <span className="w-[32px] text-right text-[16px] leading-[18px] text-[#ddd] pr-[8px]">2</span>
          <div className="relative w-[49px] h-[33px] ml-[3px] bg-white border border-[#666]">
            <span className="absolute left-[24px] top-[15px] w-[3px] h-[4px] bg-[#3a6cc8]" />
            <span className="absolute left-[33px] top-[15px] w-[12px] h-[3px] bg-[#555]" />
          </div>
        </div>
      </div>
      <div className="flex-1 min-w-0 flex flex-col">
        <div className="h-[1594px] pl-[18px] pt-[475px] shrink-0"><Slide /></div>
        <div className="flex-1 border-t border-[#4e4e4e] pl-[10px] pt-[8px] text-[14px] text-[#cfcfcf] leading-[20px]">Щелкните</div>
      </div>
      <div className="w-[17px] bg-[#3a3a3a] flex flex-col items-center shrink-0">
        <div className="h-[1510px]" />
        <div className="w-full h-[14px] bg-[#5a5a5a] flex items-center justify-center"><ChevronDown size={10} className="text-[#999]" /></div>
        <ChevronUp size={11} className="mt-[10px] text-[#999]" />
        <ChevronDown size={11} className="mt-[6px] text-[#999]" />
      </div>
    </div>
    <StatusRight />
    <div className="h-[47px] bg-[linear-gradient(90deg,#0a1438,#0c1c50_50%,#0a1540)] flex items-center">
      <TaskIcons />
      <div className="ml-auto"><Clock /></div>
    </div>

    {/* dialog peeking out from behind */}
    <div className="absolute left-0 top-[397px] w-[69px] h-[632px] bg-[#1b1b1b] rounded-tr-[6px] rounded-br-[6px] border-r border-t border-[#3c3c3c] flex flex-col text-[#cfcfcf] shadow-[4px_4px_10px_rgba(0,0,0,0.35)]">
      <div className="h-[38px] flex items-center relative">
        <span className="w-[5px] h-[11px] border border-l-0 border-[#777]" />
        <X size={16} strokeWidth={1} className="absolute left-[38px] top-[6px] text-[#888]" />
      </div>
      <div className="h-[55px] bg-[#2f2f2f] flex items-start pt-[22px] pl-[1px] text-[14px] leading-[10px] font-bold">··</div>
      <div className="h-[11px]" />
      <div className="h-[33px] w-[57px] border border-l-0 border-[#5a5a5a] flex items-center justify-end pr-[6px]"><Search size={12} className="text-[#888] -scale-x-100" /></div>
      <div className="h-[13px]" />
      <div className="h-[28px] bg-white" />
      <div className="flex-1 relative">
        <span className="absolute left-[47px] top-0 w-[1px] h-[25px] bg-[#666]" />
        <span className="absolute left-[60px] top-[18px] w-[2px] h-[328px] bg-[#7a7a7a]" />
        <div className="absolute left-0 top-[113px] w-[53px] h-[22px] bg-[#333] text-[11px] leading-[22px] pl-[1px] font-semibold">ми</div>
        <span className="absolute left-0 top-[391px] w-[35px] h-[1px] bg-black" />
        <div className="absolute left-[21px] top-[408px] w-[22px] h-[22px] bg-[#5e5e5e] flex items-center justify-center">
          <span className="w-[15px] h-[13px] bg-[#ccc]"><Lines kind="justify" /></span>
        </div>
        <div className="absolute left-[46px] top-[409px] w-[16px] h-[13px] bg-white border-[2px] border-[#777]" />
      </div>
      <div className="h-[23px] bg-[#eeeeee] rounded-br-[6px]" />
    </div>

    {/* accessibility tip */}
    <div className="absolute left-[140px] top-[1613px] w-[286px] h-[229px] bg-[#0a0a0a] border border-white px-[12px] pt-[13px]">
      <div className="text-[14.500px] leading-[20px] text-white">Советы по специальным<br />возможностям</div>
      <div className="mt-[3px] text-[11.300px] leading-[16px] text-[#eee] whitespace-nowrap">
        <div>Проблемы с читаемостью будут</div>
        <div>отслеживаться во время вашей работы. Вы</div>
        <div>будете получать уведомления о них.</div>
        <div className="mt-[16px]">Щелкните сообщение в строке состояния,</div>
        <div>чтобы проанализировать найденные</div>
        <div>проблемы.</div>
      </div>
      <div className="absolute right-[11px] bottom-[12px] w-[47px] h-[27px] bg-[#444] border border-[#777] flex items-center justify-center text-[11.500px] text-white">Ясно</div>
      <svg width="20" height="11" viewBox="0 0 20 11" className="absolute left-[137px] -bottom-[11px]">
        <path d="M0 0 9 10 18 0" fill="#0a0a0a" stroke="#fff" />
      </svg>
    </div>
  </div>
);

const App = () => (
  <div className="w-[2160px] h-[1920px] flex overflow-hidden bg-[#111] font-['Open_Sans',sans-serif]">
    <WordWindow />
    <PowerPointWindow />
  </div>
);

export default App;
